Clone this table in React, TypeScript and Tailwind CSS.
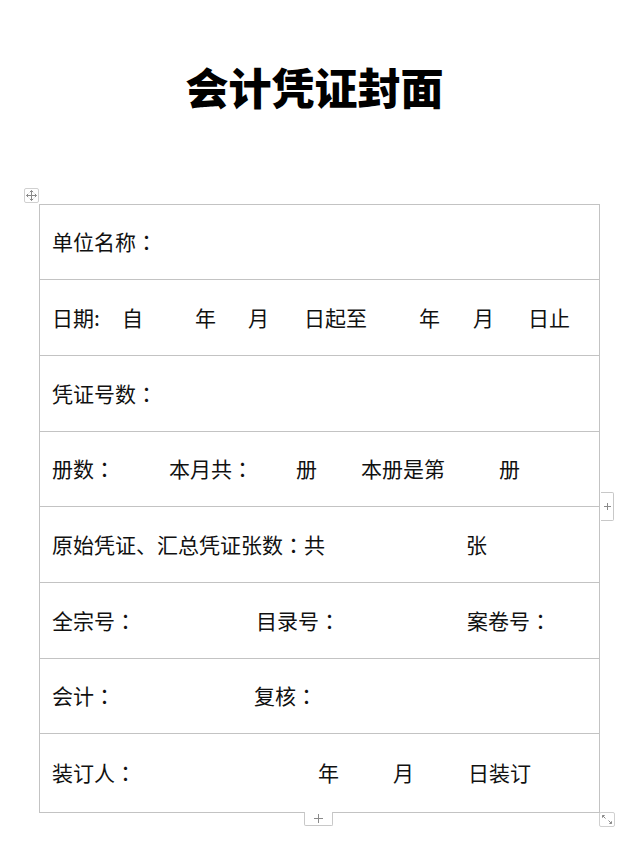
import React from 'react';

const font = { fontFamily: '"Noto Sans CJK SC", "Noto Sans", sans-serif' };

// full-width colon, centred in its cell like the original document font
function C() {
  return <span className="[font-family:'Noto_Sans_CJK_TC',sans-serif]">：</span>;
}

function Row({ h, children }: { h: string; children: React.ReactNode }) {
  return (
    <div className={`flex items-center border-b border-[#c3c3c3] last:border-b-0 pl-[12px] text-[21px] text-[#111] ${h}`}>
      {children}
    </div>
  );
}

export default function App() {
  return (
    <div className="min-h-[853px] w-[629px] bg-white" style={font}>
      {/* Title */}
      <div className="pt-[60px] text-center">
        <h1 className="text-[43px] font-black leading-[52px] text-black">会计凭证封面</h1>
      </div>

      {/* Table */}
      <div className="relative ml-[39px] mt-[92px] w-[561px]">
        {/* move handle */}
        <div className="absolute left-[-15px] top-[-16px] flex h-[15px] w-[15px] items-center justify-center rounded-[2px] border border-[#d0d0d0] bg-white">
          <svg width="11" height="11" viewBox="0 0 11 11" fill="none" stroke="#8a8a8a" strokeWidth="1">
            <path d="M5.5 0.5v10M0.5 5.5h10" />
            <path d="M3.8 2.2l1.7-1.7 1.7 1.7M3.8 8.8l1.7 1.7 1.7-1.7M2.2 3.8L0.5 5.5l1.7 1.7M8.8 3.8l1.7 1.7-1.7 1.7" />
          </svg>
        </div>

        <div className="border border-[#c3c3c3]">
          <Row h="h-[75px]">
            <span>单位名称<C /></span>
          </Row>
          <Row h="h-[76px]">
            <span className="w-[70px]">日期:</span>
            <span className="w-[73px]">自</span>
            <span className="w-[53px]">年</span>
            <span className="w-[56px]">月</span>
            <span className="w-[115px]">日起至</span>
            <span className="w-[54px]">年</span>
            <span className="w-[55px]">月</span>
            <span>日止</span>
          </Row>
          <Row h="h-[76px]">
            <span>凭证号数<C /></span>
          </Row>
          <Row h="h-[75px]">
            <span className="w-[117px]">册数<C /></span>
            <span className="w-[127px]">本月共<C /></span>
            <span className="w-[65px]">册</span>
            <span className="w-[138px]">本册是第</span>
            <span>册</span>
          </Row>
          <Row h="h-[76px]">
            <span className="w-[414px]">原始凭证、汇总凭证张数<C />共</span>
            <span>张</span>
          </Row>
          <Row h="h-[76px]">
            <span className="w-[204px]">全宗号<C /></span>
            <span className="w-[211px]">目录号<C /></span>
            <span>案卷号<C /></span>
          </Row>
          <Row h="h-[75px]">
            <span className="w-[202px]">会计<C /></span>
            <span>复核<C /></span>
          </Row>
          <Row h="h-[78px]">
            <span className="w-[266px]">装订人<C /></span>
            <span className="w-[75px]">年</span>
            <span className="w-[75px]">月</span>
            <span>日装订</span>
          </Row>
        </div>

        {/* add column tab */}
        <div className="absolute left-[562px] top-[288px] flex h-[29px] w-[13px] items-center justify-center rounded-r-[2px] border border-l-0 border-[#c8c8c8] bg-white">
          <svg width="7" height="7" viewBox="0 0 7 7" stroke="#8a8a8a" strokeWidth="1">
            <path d="M3.5 0v7M0 3.5h7" />
          </svg>
        </div>

        {/* add row tab */}
        <div className="absolute left-[265px] top-[608px] flex h-[14px] w-[29px] items-center justify-center rounded-b-[2px] border border-t-0 border-[#c8c8c8] bg-white">
          <svg width="9" height="9" viewBox="0 0 9 9" stroke="#8a8a8a" strokeWidth="1">
            <path d="M4.5 0v9M0 4.5h9" />
          </svg>
        </div>

        {/* resize handle */}
        <div className="absolute left-[560px] top-[608px] flex h-[15px] w-[16px] items-center justify-center rounded-[2px] border border-[#d0d0d0] bg-white">
          <svg width="12" height="11" viewBox="0 0 12 11" fill="none" stroke="#8a8a8a" strokeWidth="1">
            <path d="M1.5 1.5l3 3M1.5 1.5h2.2M1.5 1.5v2.2" />
            <path d="M10.5 9.5l-3-3M10.5 9.5h-2.2M10.5 9.5v-2.2" />
          </svg>
        </div>
      </div>
    </div>
  );
}
